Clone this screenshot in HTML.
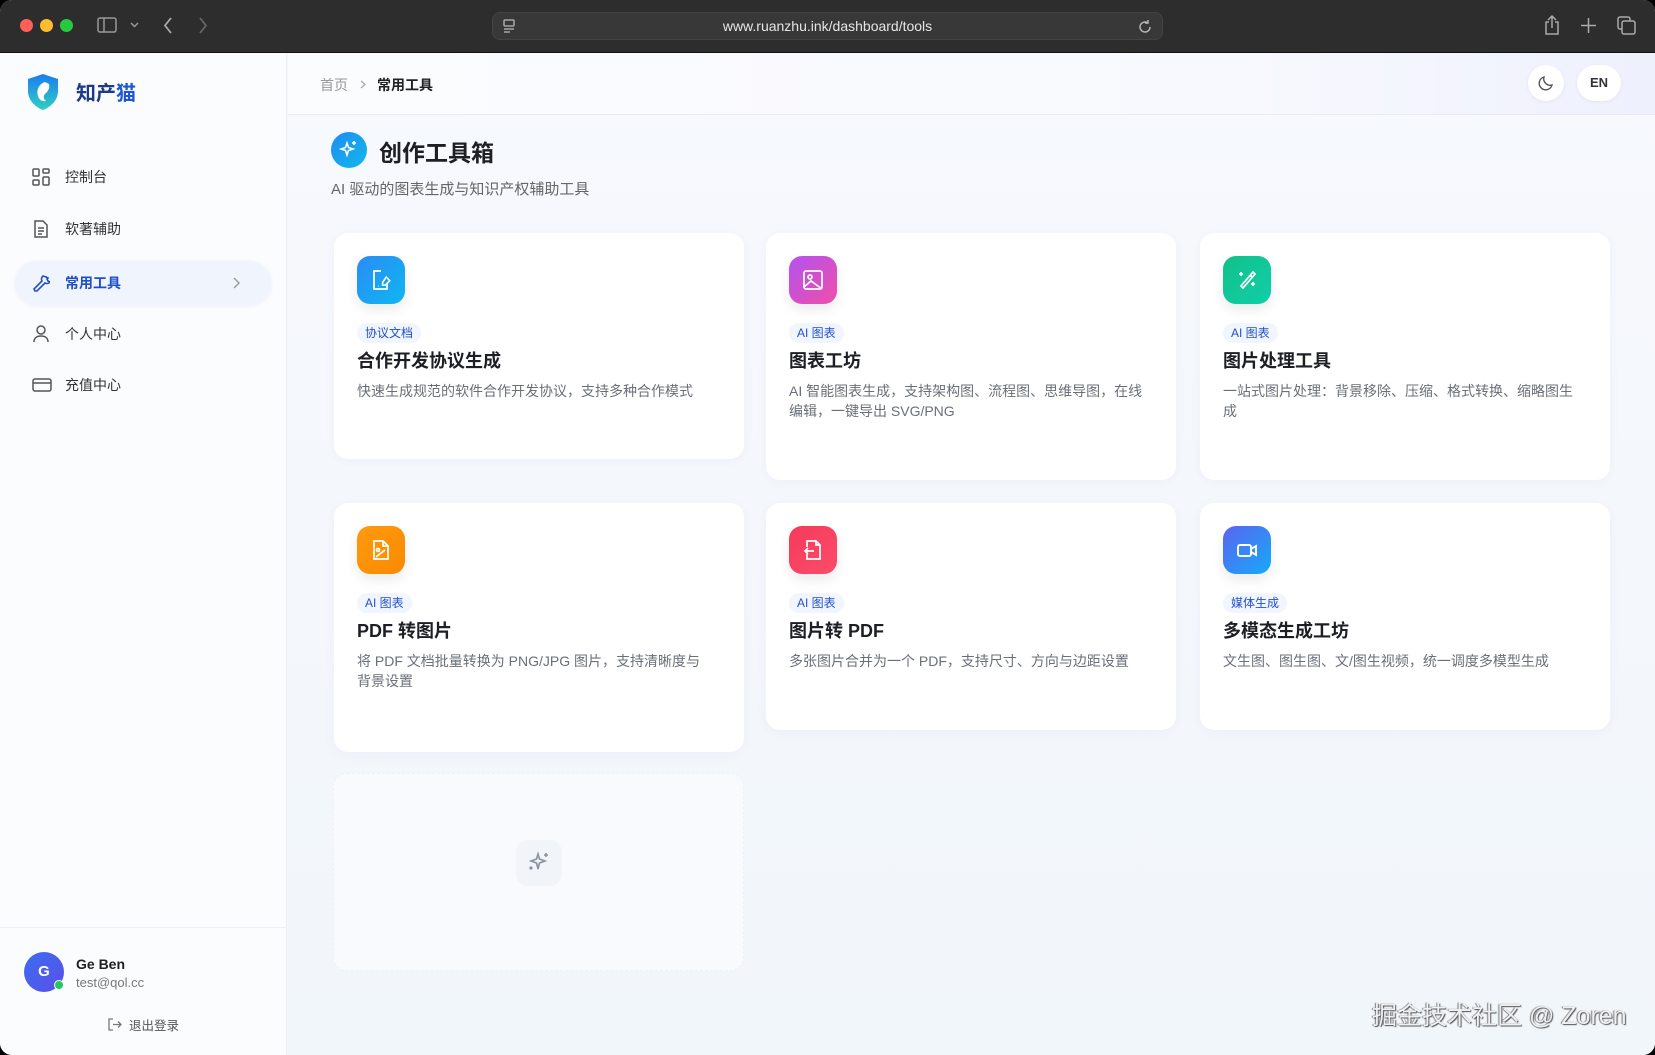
<!DOCTYPE html>
<html><head><meta charset="utf-8">
<style>
*{box-sizing:border-box;margin:0;padding:0}
body{width:1655px;height:1055px;overflow:hidden;background:#000;font-family:"Liberation Sans","Noto Sans CJK SC",sans-serif;position:relative}
.win{position:absolute;left:0;top:0;width:1655px;height:1055px;border-radius:12px;overflow:hidden;background:#f3f7fb}
.bar{position:absolute;left:0;top:0;width:1655px;height:53px;background:#2d2d2d;border-bottom:1px solid #111}
.dot{position:absolute;top:19px;width:13px;height:13px;border-radius:50%}
.url{position:absolute;left:492px;top:12px;width:671px;height:28px;border-radius:8px;background:#383838;border:1px solid #444;color:#e6e6e6;font-size:14px;text-align:center;line-height:26px}
.side{position:absolute;left:0;top:53px;width:287px;height:1002px;background:#fbfcfe;border-right:1px solid #eceff4}
.nav{position:absolute;left:15px;width:256px;height:44px;font-size:14px;color:#333;line-height:44px;padding-left:50px}
.nav svg{position:absolute;left:17px;top:13px}
.main{position:absolute;left:288px;top:53px;right:0;bottom:0;background:linear-gradient(180deg,#f7f9fd,#f1f6fb)}
.hdr{position:absolute;left:288px;top:53px;right:0;height:62px;border-bottom:1px solid #e8ecf2;background:linear-gradient(90deg,#fbfcfe,#f8f9fe 70%,#eef0fd)}
.card{position:absolute;background:#fff;border-radius:14px;box-shadow:0 2px 12px rgba(30,60,120,.04)}
.ic{position:absolute;left:23px;top:23px;width:48px;height:48px;border-radius:13px;box-shadow:0 6px 12px rgba(0,0,0,.08);display:flex;align-items:center;justify-content:center}
.tag{position:absolute;left:23px;top:90px;padding:0 8px;height:20px;line-height:20px;border-radius:10px;background:#f1f5fd;color:#2450c8;font-size:12px}
.ct{position:absolute;left:23px;top:114px;font-size:18px;font-weight:bold;color:#1d1f24}
.cd{position:absolute;left:23px;top:148px;right:32px;font-size:14px;line-height:20px;color:#6a6f78}
</style></head><body>
<div class="win">
<div class="bar">
 <div class="dot" style="left:20px;background:#fe5f57"></div>
 <div class="dot" style="left:40px;background:#febc2e"></div>
 <div class="dot" style="left:60px;background:#28c840"></div>
 <svg style="position:absolute;left:97px;top:17px" width="20" height="17" viewBox="0 0 20 17" fill="none" stroke="#999" stroke-width="1.5"><rect x="1" y="1" width="18" height="14" rx="2"/><path d="M7 1v14"/></svg>
 <svg style="position:absolute;left:130px;top:22px" width="9" height="6" fill="none" stroke="#999" stroke-width="1.5"><path d="M1 1l3.5 3.5L8 1"/></svg>
 <svg style="position:absolute;left:163px;top:17px" width="10" height="17" fill="none" stroke="#aaa" stroke-width="1.8"><path d="M8 1L2 8.5 8 16"/></svg>
 <svg style="position:absolute;left:198px;top:17px" width="10" height="17" fill="none" stroke="#666" stroke-width="1.8"><path d="M2 1l6 7.5L2 16"/></svg>
 <div class="url">www.ruanzhu.ink/dashboard/tools
  <svg style="position:absolute;left:10px;top:6px" width="12" height="15" fill="none" stroke="#bbb" stroke-width="1.3"><rect x="1" y="1" width="10" height="6" rx="1"/><path d="M1 10h10M1 13h6"/></svg>
  <svg style="position:absolute;right:10px;top:6px" width="14" height="15" fill="none" stroke="#bbb" stroke-width="1.4"><path d="M12 8a5 5 0 1 1-2-4M10 1v3h-3"/></svg>
 </div>
 <svg style="position:absolute;left:1544px;top:15px" width="16" height="20" fill="none" stroke="#aaa" stroke-width="1.5"><path d="M5 7H2v12h12V7h-3M8 13V1M4 5l4-4 4 4"/></svg>
 <svg style="position:absolute;left:1581px;top:18px" width="15" height="15" fill="none" stroke="#aaa" stroke-width="1.5"><path d="M7.5 0v15M0 7.5h15"/></svg>
 <svg style="position:absolute;left:1617px;top:16px" width="19" height="19" fill="none" stroke="#aaa" stroke-width="1.5"><rect x="1" y="1" width="12" height="12" rx="2"/><rect x="5" y="5" width="13" height="13" rx="2" fill="#2d2d2d"/></svg>
</div>

<div class="side">
 <svg style="position:absolute;left:26px;top:20px" width="34" height="38" viewBox="0 0 34 38"><defs><linearGradient id="lg" x1="0" y1="0" x2="0" y2="1"><stop offset="0" stop-color="#1a7cf0"/><stop offset="1" stop-color="#2fd0c0"/></linearGradient></defs><path d="M17 1L2 6v12c0 9 7 16 15 19 8-3 15-10 15-19V6z" fill="url(#lg)"/><path d="M19 9c-6 2-9 8-7 14 1 4 5 6 8 5-3-2-3-6 0-8 2-2 4-5 3-9z" fill="#fff"/></svg>
 <div style="position:absolute;left:76px;top:24px;font-size:20px;font-weight:bold;color:#1d3a8a">知产<span style="color:#1f56d8">猫</span></div>
 <div class="nav" style="top:102px"><svg width="18" height="18" fill="none" stroke="#555" stroke-width="1.5"><rect x="1" y="1" width="6" height="7" rx="1"/><rect x="11" y="1" width="6" height="4" rx="1"/><rect x="1" y="12" width="6" height="5" rx="1"/><rect x="11" y="9" width="6" height="8" rx="1"/></svg>控制台</div>
 <div class="nav" style="top:154px"><svg width="18" height="18" fill="none" stroke="#555" stroke-width="1.5"><path d="M3 1h8l4 4v12H3zM6 8h6M6 11h6M6 14h4"/></svg>软著辅助</div>
 <div class="nav" style="top:208px;background:#f0f5fd;border-radius:22px;box-shadow:0 1px 4px rgba(30,80,200,.08);color:#1f4fc7;font-weight:bold"><svg width="18" height="18" fill="none" stroke="#1f4fc7" stroke-width="1.6"><path d="M11 2a4 4 0 0 0-1 5L2 15l1 2 2 0 8-8a4 4 0 0 0 5-1l-2-1-1-2 1-1-2-1z"/></svg>常用工具
  <svg style="left:218px;top:16px" width="7" height="12" fill="none" stroke="#999" stroke-width="1.4"><path d="M1 1l5 5-5 5"/></svg></div>
 <div class="nav" style="top:259px"><svg width="18" height="18" fill="none" stroke="#555" stroke-width="1.5"><circle cx="9" cy="5" r="4"/><path d="M2 17c0-4 3-6 7-6s7 2 7 6"/></svg>个人中心</div>
 <div class="nav" style="top:310px"><svg width="20" height="18" fill="none" stroke="#555" stroke-width="1.5"><rect x="1" y="3" width="18" height="12" rx="2"/><path d="M1 7h18"/></svg>充值中心</div>
 <div style="position:absolute;left:0;right:0;top:874px;border-top:1px solid #eceff4"></div>
 <div style="position:absolute;left:24px;top:899px;width:40px;height:40px;border-radius:50%;background:linear-gradient(135deg,#3b6df0,#5a4fe8);color:#fff;font-weight:bold;font-size:15px;text-align:center;line-height:40px">G</div>
 <div style="position:absolute;left:54px;top:927px;width:10px;height:10px;border-radius:50%;background:#22c55e;border:1.5px solid #fff"></div>
 <div style="position:absolute;left:76px;top:903px;font-size:14px;font-weight:bold;color:#1d1f24">Ge Ben</div>
 <div style="position:absolute;left:76px;top:922px;font-size:13px;color:#777">test@qol.cc</div>
 <svg style="position:absolute;left:108px;top:965px" width="14" height="13" fill="none" stroke="#777" stroke-width="1.3"><path d="M5 1H1v11h4M5 6.5h8M10 3.5l3 3-3 3"/></svg>
 <div style="position:absolute;left:129px;top:962px;font-size:12.5px;color:#555">退出登录</div>
</div>

<div class="main"></div>
<div class="hdr">
 <div style="position:absolute;left:32px;top:22px;font-size:14px;color:#999">首页</div>
 <svg style="position:absolute;left:72px;top:27px" width="6" height="9" fill="none" stroke="#aaa" stroke-width="1.3"><path d="M1 1l4 3.5L1 8"/></svg>
 <div style="position:absolute;left:89px;top:22px;font-size:14px;color:#222;font-weight:bold">常用工具</div>
 <div style="position:absolute;left:1240px;top:12px;width:36px;height:36px;border-radius:50%;background:#fff;box-shadow:0 1px 4px rgba(0,0,0,.06)"><svg style="position:absolute;left:10px;top:10px" width="16" height="16" fill="none" stroke="#555" stroke-width="1.4"><path d="M14 10A6.5 6.5 0 0 1 6 2a6.5 6.5 0 1 0 8 8z"/></svg></div>
 <div style="position:absolute;left:1289px;top:12px;width:44px;height:36px;border-radius:18px;background:#fff;box-shadow:0 1px 4px rgba(0,0,0,.06);font-size:13px;font-weight:bold;color:#333;text-align:center;line-height:36px">EN</div>
</div>

<div style="position:absolute;left:331px;top:132px;width:36px;height:36px;border-radius:50%;background:linear-gradient(135deg,#1c8cf5,#14b8e8);display:flex;align-items:center;justify-content:center"><svg width="20" height="20" fill="none" stroke="#fff" stroke-width="1.6"><path d="M8 3l1.5 4.5L14 9l-4.5 1.5L8 15l-1.5-4.5L2 9l4.5-1.5zM15 1v4M13 3h4"/></svg></div>
<div style="position:absolute;left:379px;top:134px;font-size:23px;font-weight:bold;color:#1d1f24">创作工具箱</div>
<div style="position:absolute;left:331px;top:178px;font-size:15px;color:#666">AI 驱动的图表生成与知识产权辅助工具</div>

<div class="card" style="left:334px;top:233px;width:410px;height:226px">
 <div class="ic" style="background:linear-gradient(135deg,#2a8cf6,#0fb6f0)"><svg width="22" height="22" fill="none" stroke="#fff" stroke-width="1.7"><path d="M11 2H4v18h13v-6M8 17h.5"/><path d="M15 8l4 4-5 5h-3v-3z" transform="scale(.9) translate(3,1)"/></svg></div>
 <div class="tag">协议文档</div><div class="ct">合作开发协议生成</div><div class="cd">快速生成规范的软件合作开发协议，支持多种合作模式</div></div>
<div class="card" style="left:766px;top:233px;width:410px;height:247px">
 <div class="ic" style="background:linear-gradient(135deg,#b452f0,#ee4fa8)"><svg width="22" height="22" fill="none" stroke="#fff" stroke-width="1.7"><rect x="2" y="2" width="18" height="18" rx="2"/><circle cx="8" cy="8" r="2"/><path d="M2 18l7-6 11 8"/></svg></div>
 <div class="tag">AI 图表</div><div class="ct">图表工坊</div><div class="cd">AI 智能图表生成，支持架构图、流程图、思维导图，在线编辑，一键导出 SVG/PNG</div></div>
<div class="card" style="left:1200px;top:233px;width:410px;height:247px">
 <div class="ic" style="background:linear-gradient(135deg,#12c08a,#10cfa8)"><svg width="22" height="22" fill="none" stroke="#fff" stroke-width="1.7"><path d="M17 3l2 2L7 19l-2-2zM14 6l2 2M5 3v4M3 5h4M17 13v4M15 15h4"/></svg></div>
 <div class="tag">AI 图表</div><div class="ct">图片处理工具</div><div class="cd">一站式图片处理：背景移除、压缩、格式转换、缩略图生成</div></div>
<div class="card" style="left:334px;top:503px;width:410px;height:249px">
 <div class="ic" style="background:linear-gradient(135deg,#ff9a10,#f98a00)"><svg width="22" height="22" fill="none" stroke="#fff" stroke-width="1.7"><path d="M13 2H4v18h14V7zM13 2v5h5"/><circle cx="8" cy="11" r="1.5"/><path d="M6 18l9-7"/></svg></div>
 <div class="tag">AI 图表</div><div class="ct">PDF 转图片</div><div class="cd">将 PDF 文档批量转换为 PNG/JPG 图片，支持清晰度与背景设置</div></div>
<div class="card" style="left:766px;top:503px;width:410px;height:227px">
 <div class="ic" style="background:linear-gradient(135deg,#f53a5a,#fb4d6a)"><svg width="22" height="22" fill="none" stroke="#fff" stroke-width="1.7"><path d="M5 8V2h9l4 4v14H5v-5M14 2v4h4M12 12H3M6 9l-3 3 3 3"/></svg></div>
 <div class="tag">AI 图表</div><div class="ct">图片转 PDF</div><div class="cd">多张图片合并为一个 PDF，支持尺寸、方向与边距设置</div></div>
<div class="card" style="left:1200px;top:503px;width:410px;height:227px">
 <div class="ic" style="background:linear-gradient(135deg,#5a64f0,#16aaf8)"><svg width="22" height="22" fill="none" stroke="#fff" stroke-width="1.9"><rect x="2" y="6" width="13" height="11" rx="2"/><path d="M15 10l5-3v9l-5-3"/></svg></div>
 <div class="tag">媒体生成</div><div class="ct">多模态生成工坊</div><div class="cd">文生图、图生图、文/图生视频，统一调度多模型生成</div></div>

<div style="position:absolute;left:333px;top:773px;width:411px;height:198px;border:1.5px dashed #eef1f6;border-radius:14px;background:#f8fafd"></div>
<div style="position:absolute;left:516px;top:840px;width:46px;height:46px;border-radius:12px;background:#f1f4f8;display:flex;align-items:center;justify-content:center"><svg width="24" height="24" fill="none" stroke="#8a92a0" stroke-width="1.6"><path d="M11 3l1.5 5L18 10l-5.5 2L11 18l-1.5-6L4 10l5.5-2zM19 2v4M17 4h4"/><circle cx="4" cy="17" r=".8" fill="#8a92a0"/></svg></div>

<div style="position:absolute;left:1372px;top:996px;font-size:25px;color:#eef0f2;text-shadow:1px 1px 1px #555,-1px 0 1px #777;font-family:'Liberation Sans','Noto Sans CJK SC',sans-serif">掘金技术社区 @ Zoren</div>
</div>
</body></html>
